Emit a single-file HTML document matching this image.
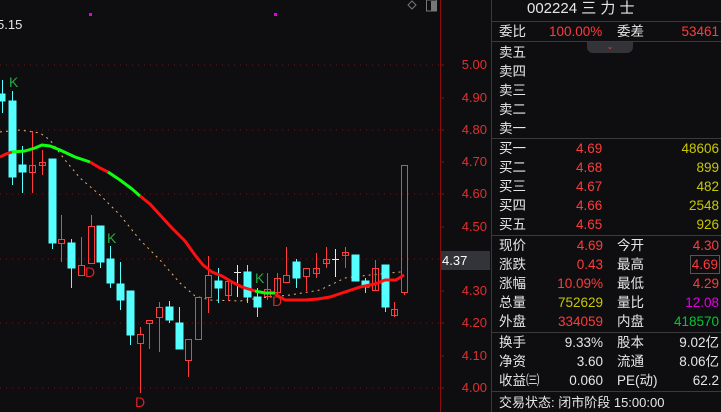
<!DOCTYPE html>
<html><head><meta charset="utf-8"><style>
*{margin:0;padding:0;box-sizing:border-box}
body{width:721px;height:412px;background:#0e0e11;overflow:hidden;position:relative;font-family:"Liberation Sans","Noto Sans CJK SC",sans-serif;font-size:13.5px;color:#e6e6e6}
.p{position:absolute;left:491px;top:0;width:230px;height:412px;background:#0e0e11;border-left:1px solid #3a3a3a}
.r{position:absolute;height:19px;line-height:19px;white-space:nowrap}
.hl{position:absolute;left:0;width:230px;height:1px;background:#3a3a3a}
.red{color:#ff3b3b}.yel{color:#c8c800}.mag{color:#e000e0}.grn{color:#00c832}
.ax{position:absolute;right:234px;font-size:13px;color:#e03030;width:45px;text-align:right}
</style></head><body>
<svg width="491" height="412" style="position:absolute;left:0;top:0">
<g stroke="#7a1010" stroke-dasharray="1,5" stroke-width="1">
<line x1="0" y1="65" x2="440" y2="65"/><line x1="0" y1="130" x2="440" y2="130"/><line x1="0" y1="194" x2="440" y2="194"/><line x1="0" y1="259" x2="440" y2="259"/><line x1="0" y1="323" x2="440" y2="323"/><line x1="0" y1="388" x2="440" y2="388"/>
</g>
<line x1="440.5" y1="0" x2="440.5" y2="412" stroke="#8a0c0c"/>
<g stroke="#8a0c0c">
<line x1="440" y1="65" x2="444" y2="65"/><line x1="440" y1="98" x2="444" y2="98"/><line x1="440" y1="130" x2="444" y2="130"/><line x1="440" y1="162" x2="444" y2="162"/><line x1="440" y1="194" x2="444" y2="194"/><line x1="440" y1="227" x2="444" y2="227"/><line x1="440" y1="259" x2="444" y2="259"/><line x1="440" y1="291" x2="444" y2="291"/><line x1="440" y1="323" x2="444" y2="323"/><line x1="440" y1="356" x2="444" y2="356"/><line x1="440" y1="388" x2="444" y2="388"/>
</g>
<rect x="89" y="13" width="3" height="3" fill="#e000e0"/><rect x="274" y="13" width="3" height="3" fill="#e000e0"/>
<path d="M412 1 L416 5 L412 9 L408 5Z" fill="none" stroke="#777"/>
<rect x="426.5" y="0" width="10" height="11" fill="none" stroke="#777"/><rect x="431" y="1" width="5" height="10" fill="#777"/>
<!-- yellow dashed MA -->
<polyline fill="none" stroke="#e8b070" stroke-width="1" stroke-dasharray="2,4" points="0,132 20,130 40,133 50,140 65,160 80,178 100,195 120,215 140,240 160,260 180,283 195,296 210,300 240,301 260,298 290,295 320,290 345,278 370,275 400,272 404,271"/>
<!-- candles -->
<g stroke-width="1">
<g stroke="#55ffff" fill="#55ffff">
<line x1="2.5" y1="80" x2="2.5" y2="113"/><rect x="0" y="94" width="5" height="7"/>
<line x1="12.5" y1="91" x2="12.5" y2="185"/><rect x="9" y="101" width="7" height="76"/>
<line x1="22.5" y1="146" x2="22.5" y2="193"/><rect x="19" y="165" width="7" height="7"/>
<line x1="52.5" y1="159" x2="52.5" y2="249"/><rect x="49" y="159" width="7" height="84"/>
<line x1="71.5" y1="239" x2="71.5" y2="288"/><rect x="68" y="243" width="7" height="25"/>
<line x1="100.5" y1="226" x2="100.5" y2="268"/><rect x="97" y="226" width="7" height="36"/>
<line x1="110.5" y1="246" x2="110.5" y2="288"/><rect x="107" y="259" width="7" height="24"/>
<line x1="120.5" y1="262" x2="120.5" y2="310"/><rect x="117" y="284" width="7" height="16"/>
<line x1="130.5" y1="291" x2="130.5" y2="345"/><rect x="127" y="291" width="7" height="44"/>
<line x1="169.5" y1="301" x2="169.5" y2="323"/><rect x="166" y="307" width="7" height="13"/>
<line x1="179.5" y1="307" x2="179.5" y2="349"/><rect x="176" y="323" width="7" height="26"/>
<line x1="218.5" y1="268" x2="218.5" y2="303"/><rect x="215" y="281" width="7" height="7"/>
<line x1="247.5" y1="265" x2="247.5" y2="303"/><rect x="244" y="272" width="7" height="25"/>
<line x1="257.5" y1="288" x2="257.5" y2="317"/><rect x="254" y="297" width="7" height="10"/>
<line x1="296.5" y1="259" x2="296.5" y2="288"/><rect x="293" y="262" width="7" height="16"/>
<rect x="352" y="255" width="7" height="26"/>
<line x1="365.5" y1="278" x2="365.5" y2="293"/><rect x="362" y="281" width="7" height="6"/>
<line x1="385.5" y1="265" x2="385.5" y2="312"/><rect x="382" y="265" width="7" height="42"/>
</g>
<g stroke="#ff3b3b" fill="none">
<line x1="32.5" y1="131" x2="32.5" y2="193"/><rect x="29.5" y="165.5" width="6" height="7"/>
<line x1="42.5" y1="150" x2="42.5" y2="175"/><rect x="39.5" y="162.5" width="6" height="3"/>
<line x1="61.5" y1="215" x2="61.5" y2="239"/><line x1="61.5" y1="243" x2="61.5" y2="262"/><rect x="58.5" y="239.5" width="6" height="4"/>
<line x1="81.5" y1="237" x2="81.5" y2="265"/><rect x="78.5" y="265.5" width="6" height="10"/>
<line x1="91.5" y1="215" x2="91.5" y2="226"/><rect x="88.5" y="226.5" width="6" height="37"/>
<line x1="140.5" y1="327" x2="140.5" y2="334"/><line x1="140.5" y1="343" x2="140.5" y2="393"/><rect x="137.5" y="334.5" width="6" height="9"/>
<line x1="149.5" y1="323" x2="149.5" y2="349"/><rect x="146.5" y="320.5" width="6" height="3"/>
<line x1="159.5" y1="302" x2="159.5" y2="307"/><line x1="159.5" y1="317" x2="159.5" y2="352"/><rect x="156.5" y="307.5" width="6" height="10"/>
<line x1="188.5" y1="360" x2="188.5" y2="377"/><rect x="185.5" y="339.5" width="6" height="21"/>
<rect x="195.5" y="297.5" width="6" height="42"/>
<line x1="208.5" y1="256" x2="208.5" y2="275"/><line x1="208.5" y1="297" x2="208.5" y2="313"/><rect x="205.5" y="275.5" width="6" height="22"/>
<line x1="228.5" y1="279" x2="228.5" y2="301"/><rect x="225.5" y="281.5" width="6" height="14"/>
<line x1="267.5" y1="273" x2="267.5" y2="300"/><rect x="264.5" y="289.5" width="6" height="7"/>
<line x1="277.5" y1="273" x2="277.5" y2="294"/><rect x="274.5" y="278.5" width="6" height="14"/>
<line x1="286.5" y1="247" x2="286.5" y2="275"/><rect x="283.5" y="275.5" width="6" height="7"/>
<line x1="306.5" y1="276" x2="306.5" y2="291"/><rect x="303.5" y="268.5" width="6" height="8"/>
<line x1="316.5" y1="253" x2="316.5" y2="278"/><rect x="313.5" y="268.5" width="6" height="5"/>
<line x1="326.5" y1="247" x2="326.5" y2="268"/><rect x="323.5" y="259.5" width="6" height="4"/>
<line x1="345.5" y1="247" x2="345.5" y2="268"/><rect x="342.5" y="252.5" width="6" height="3"/>
<line x1="375.5" y1="260" x2="375.5" y2="290"/><rect x="372.5" y="268.5" width="6" height="22"/>
<line x1="394.5" y1="302" x2="394.5" y2="317"/><rect x="391.5" y="309.5" width="6" height="6"/>
<rect x="401.5" y="165.5" width="6" height="127"/><line x1="404.5" y1="292" x2="404.5" y2="295"/>
</g>
<g stroke="#e8e8e8"><line x1="237.5" y1="265" x2="237.5" y2="297"/><line x1="234" y1="272.5" x2="241" y2="272.5"/><line x1="335.5" y1="249" x2="335.5" y2="277"/><line x1="332" y1="259.5" x2="339" y2="259.5"/></g>
</g>
<!-- thick MA -->
<g fill="none" stroke-width="3" stroke-linejoin="round">
<polyline stroke="#ff1010" points="0,157 6,154 12,152"/>
<polyline stroke="#10ff10" points="12,152 25,151 35,148 42,145 50,146 60,150 75,157 90,162"/>
<polyline stroke="#ff1010" points="90,162 100,168 108,172"/>
<polyline stroke="#10ff10" points="108,172 120,180 132,189 140,196"/>
<polyline stroke="#ff1010" points="140,196 150,204 160,215 172,228 185,241 195,255 203,265 212,272 222,276 232,282 242,287 255,291"/>
<polyline stroke="#10ff10" points="255,291 265,293 275,293"/>
<polyline stroke="#ff1010" points="275,294 285,300 305,300 318,299 330,297 345,292 360,287 375,284 385,280 396,280 404,275"/>
</g>
<g font-family="Liberation Sans,sans-serif" font-size="14">
<text x="9" y="87" fill="#22b040">K</text><text x="107" y="243" fill="#22b040">K</text><text x="255" y="283" fill="#22b040">K</text>
<text x="85" y="277" fill="#e02020">D</text><text x="135" y="407" fill="#e02020">D</text><text x="272" y="306" fill="#e02020">D</text>
<text x="-3" y="29" fill="#e6e6e6" font-size="13">5.15</text>
</g>
<rect x="441" y="251" width="49" height="19" fill="#33333a"/>
<text x="442" y="265" fill="#fff" font-family="Liberation Sans,sans-serif" font-size="13">4.37</text>
</svg>
<div class="ax" style="top:57px">5.00</div><div class="ax" style="top:90px">4.90</div><div class="ax" style="top:122px">4.80</div><div class="ax" style="top:154px">4.70</div><div class="ax" style="top:186px">4.60</div><div class="ax" style="top:219px">4.50</div><div class="ax" style="top:283px">4.30</div><div class="ax" style="top:315px">4.20</div><div class="ax" style="top:348px">4.10</div><div class="ax" style="top:380px">4.00</div>
<div class="p">
<div class="r" style="left:35px;top:-1px;font-size:15px;line-height:19px">002224 三 力 士</div>
<div class="hl" style="top:21px"></div>
<div class="r" style="left:7px;top:22px">委比</div><div class="r red" style="left:57px;top:22px">100.00%</div><div class="r" style="left:125px;top:22px">委差</div><div class="r red" style="right:2px;top:22px">53461</div>
<div class="hl" style="top:41px"></div>
<div style="position:absolute;left:95px;top:42px;width:46px;height:11px;background:#333338;border-radius:0 0 6px 6px;color:#ff3b3b;font-size:8px;text-align:center;line-height:9px">⌄</div>
<div class="r" style="left:7px;top:43px">卖五</div><div class="r" style="left:7px;top:62px">卖四</div><div class="r" style="left:7px;top:81px">卖三</div><div class="r" style="left:7px;top:100px">卖二</div><div class="r" style="left:7px;top:119px">卖一</div>
<div class="hl" style="top:138px"></div>
<div class="r" style="left:7px;top:139px">买一</div><div class="r red" style="left:84px;top:139px">4.69</div><div class="r yel" style="right:2px;top:139px">48606</div>
<div class="r" style="left:7px;top:158px">买二</div><div class="r red" style="left:84px;top:158px">4.68</div><div class="r yel" style="right:2px;top:158px">899</div>
<div class="r" style="left:7px;top:177px">买三</div><div class="r red" style="left:84px;top:177px">4.67</div><div class="r yel" style="right:2px;top:177px">482</div>
<div class="r" style="left:7px;top:196px">买四</div><div class="r red" style="left:84px;top:196px">4.66</div><div class="r yel" style="right:2px;top:196px">2548</div>
<div class="r" style="left:7px;top:215px">买五</div><div class="r red" style="left:84px;top:215px">4.65</div><div class="r yel" style="right:2px;top:215px">926</div>
<div class="hl" style="top:235px"></div>
<div class="r" style="left:7px;top:236px">现价</div><div class="r red" style="right:118px;top:236px">4.69</div><div class="r" style="left:125px;top:236px">今开</div><div class="r red" style="right:2px;top:236px">4.30</div>
<div class="r" style="left:7px;top:255px">涨跌</div><div class="r red" style="right:118px;top:255px">0.43</div><div class="r" style="left:125px;top:255px">最高</div><div class="r red" style="right:1px;top:255px;border:1px solid #555;padding:0 1px;line-height:17px">4.69</div>
<div class="r" style="left:7px;top:274px">涨幅</div><div class="r red" style="right:118px;top:274px">10.09%</div><div class="r" style="left:125px;top:274px">最低</div><div class="r red" style="right:2px;top:274px">4.29</div>
<div class="r" style="left:7px;top:293px">总量</div><div class="r yel" style="right:118px;top:293px">752629</div><div class="r" style="left:125px;top:293px">量比</div><div class="r mag" style="right:2px;top:293px">12.08</div>
<div class="r" style="left:7px;top:312px">外盘</div><div class="r red" style="right:118px;top:312px">334059</div><div class="r" style="left:125px;top:312px">内盘</div><div class="r grn" style="right:2px;top:312px">418570</div>
<div class="hl" style="top:332px"></div>
<div class="r" style="left:7px;top:333px">换手</div><div class="r" style="right:118px;top:333px">9.33%</div><div class="r" style="left:125px;top:333px">股本</div><div class="r" style="right:2px;top:333px">9.02亿</div>
<div class="r" style="left:7px;top:352px">净资</div><div class="r" style="right:118px;top:352px">3.60</div><div class="r" style="left:125px;top:352px">流通</div><div class="r" style="right:2px;top:352px">8.06亿</div>
<div class="r" style="left:7px;top:371px">收益㈢</div><div class="r" style="right:118px;top:371px">0.060</div><div class="r" style="left:125px;top:371px">PE(动)</div><div class="r" style="right:2px;top:371px">62.2</div>
<div class="hl" style="top:391px"></div>
<div class="r" style="left:7px;top:393px;font-size:13px">交易状态: 闭市阶段 15:00:00</div>
</div>
</body></html>
